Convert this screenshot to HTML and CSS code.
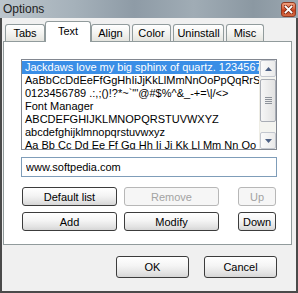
FILE: index.html
```html
<!DOCTYPE html>
<html lang="en">

<head>
    <meta charset="UTF-8">
    <title>Options</title>
    <link rel="stylesheet" href="styles.css">
</head>

<body>

    <div class="window">

        <div class="titlebar">
            <span class="title">Options</span>
            <div class="close">
                <svg width="9" height="9" viewBox="0 0 9 9">
                    <path d="M1.5 1.5 L7.5 7.5 M7.5 1.5 L1.5 7.5" stroke="#7a2a14" stroke-width="3.4" stroke-linecap="square" />
                    <path d="M1.5 1.5 L7.5 7.5 M7.5 1.5 L1.5 7.5" stroke="#ffffff" stroke-width="1.8" stroke-linecap="square" />
                </svg>
            </div>
        </div>

        <div class="client">

            <div class="tabs">
                <div class="tab">Tabs</div>
                <div class="tab active">Text</div>
                <div class="tab">Align</div>
                <div class="tab">Color</div>
                <div class="tab">Uninstall</div>
                <div class="tab">Misc</div>
            </div>

            <div class="panel">

                <div class="listbox">
                    <div class="items">
                        <div class="item selected">Jackdaws love my big sphinx of quartz. 1234567890</div>
                        <div class="item">AaBbCcDdEeFfGgHhIiJjKkLlMmNnOoPpQqRrSsTtUuVvWwXxYyZz</div>
                        <div class="item">0123456789 .:,;()!?*~`"'@#$%^&amp;_-+=\|/&lt;&gt;</div>
                        <div class="item">Font Manager</div>
                        <div class="item">ABCDEFGHIJKLMNOPQRSTUVWXYZ</div>
                        <div class="item">abcdefghijklmnopqrstuvwxyz</div>
                        <div class="item">Aa Bb Cc Dd Ee Ff Gg Hh Ii Jj Kk Ll Mm Nn Oo Pp</div>
                    </div>
                    <div class="scrollbar">
                        <div class="sbtn">
                            <svg width="7" height="4" viewBox="0 0 7 4"><path d="M0 4 L3.5 0 L7 4 Z" fill="#4d6185" /></svg>
                        </div>
                        <div class="thumb">
                            <span></span><span></span><span></span><span></span>
                        </div>
                        <div class="track"></div>
                        <div class="sbtn">
                            <svg width="7" height="4" viewBox="0 0 7 4"><path d="M0 0 L3.5 4 L7 0 Z" fill="#4d6185" /></svg>
                        </div>
                    </div>
                </div>

                <input class="field" type="text" value="www.softpedia.com">

                <div class="buttons">
                    <div class="btn">Default list</div>
                    <div class="btn disabled">Remove</div>
                    <div class="btn disabled">Up</div>
                    <div class="btn">Add</div>
                    <div class="btn">Modify</div>
                    <div class="btn">Down</div>
                </div>
            </div>

            <div class="footer">
                <div class="btn big">OK</div>
                <div class="btn big">Cancel</div>
            </div>
        </div>
    </div>

</body>

</html>
```

FILE: styles.css
```css
body {
    margin: 0;
    padding: 0;
}

* {
    box-sizing: border-box;
}

.window {
    width: 298px;
    height: 293px;
    display: flex;
    flex-direction: column;
    font-family: "Liberation Sans", Arial, sans-serif;
    font-size: 11px;
    color: #000;
}

.titlebar {
    height: 18px;
    display: flex;
    align-items: center;
    justify-content: space-between;
    padding: 0 2px 0 3px;
    background: linear-gradient(to right, #bcc5cc 0%, #a5b1ba 25%, #8e9ba6 45%, #a0acb5 65%, #8b98a2 85%, #9aa6af 100%);
}

.title {
    font-size: 12px;
    color: #1e1e1e;
    line-height: 18px;
}

.close {
    width: 15px;
    height: 15px;
    margin-top: 1px;
    border: 1px solid #8e3a22;
    border-radius: 3px;
    background: linear-gradient(#f0a07f, #d9603c 45%, #c4401d 55%, #d56a44);
    display: flex;
    align-items: center;
    justify-content: center;
}

.client {
    flex: 1;
    background: #f0f0f0;
    border: 2px solid #4a4a4a;
    border-top: 0;
    display: flex;
    flex-direction: column;
}

.tabs {
    height: 24px;
    display: flex;
    align-items: flex-end;
    gap: 2px;
    padding-left: 3px;
}

.tab {
    height: 18px;
    line-height: 16px;
    text-align: center;
    border: 1px solid #919b9c;
    border-bottom: 0;
    border-radius: 3px 3px 0 0;
    background: linear-gradient(#ffffff, #f3f3f0 50%, #e2e2dc);
}

.tab:nth-child(1) { width: 40px; }
.tab:nth-child(2) { width: 46px; }
.tab:nth-child(3) { width: 39px; }
.tab:nth-child(4) { width: 39px; }
.tab:nth-child(5) { width: 51px; }
.tab:nth-child(6) { width: 38px; }

.tab.active {
    height: 21px;
    line-height: 18px;
    margin: 0 -2px;
    background: #ffffff;
    position: relative;
    z-index: 1;
}

.panel {
    width: 289px;
    height: 204px;
    margin: -1px 0 0 1px;
    border: 1px solid #919b9c;
    background: #ffffff;
    padding: 17px 12px 0 17px;
}

.listbox {
    width: 256px;
    height: 91px;
    border: 1px solid #828790;
    display: flex;
    background: #fff;
}

.items {
    flex: 1;
    overflow: hidden;
    padding-top: 1px;
}

.item {
    height: 13px;
    line-height: 13px;
    padding-left: 3px;
    white-space: nowrap;
}

.item.selected {
    background: #3a8ee6;
    color: #fff;
}

.scrollbar {
    width: 17px;
    display: flex;
    flex-direction: column;
    background: #f4f4f0;
    border-left: 1px solid #eeede5;
}

.sbtn {
    height: 17px;
    border: 1px solid #c3c7cf;
    border-radius: 2px;
    background: linear-gradient(to right, #fbfbfb, #eaeaea);
    display: flex;
    align-items: center;
    justify-content: center;
}

.thumb {
    height: 43px;
    margin-top: 2px;
    border: 1px solid #a9adb5;
    border-radius: 2px;
    background: linear-gradient(to right, #f6f6f6, #e2e2e2);
    display: flex;
    flex-direction: column;
    align-items: center;
    justify-content: center;
    gap: 1px;
}

.thumb span {
    width: 7px;
    height: 1px;
    background: #8d929a;
}

.track {
    flex: 1;
}

.field {
    display: block;
    width: 256px;
    height: 20px;
    margin-top: 7px;
    border: 1px solid #7f9db9;
    padding: 0 0 0 4px;
    font-family: "Liberation Sans", Arial, sans-serif;
    font-size: 11px;
    color: #000;
    background: #fff;
}

.buttons {
    display: grid;
    grid-template-columns: 95px 95px 50px;
    grid-auto-rows: 19px;
    column-gap: 7px;
    row-gap: 6px;
    margin: 10px 0 0 1px;
}

.buttons .btn:nth-child(3n) {
    width: 38px;
    justify-self: end;
}

.btn {
    border: 1px solid #3c3c3c;
    border-radius: 3px;
    background: linear-gradient(#ffffff, #f4f4f4 45%, #e3e3e3 80%, #d6d6d6);
    display: flex;
    align-items: center;
    justify-content: center;
    font-size: 11px;
}

.btn.disabled {
    border-color: #b7b7b7;
    color: #a3a3a3;
    background: #f6f6f6;
}

.footer {
    display: flex;
    justify-content: flex-end;
    gap: 15px;
    margin-top: 11px;
    padding-right: 19px;
}

.btn.big {
    width: 73px;
    height: 22px;
}
```
